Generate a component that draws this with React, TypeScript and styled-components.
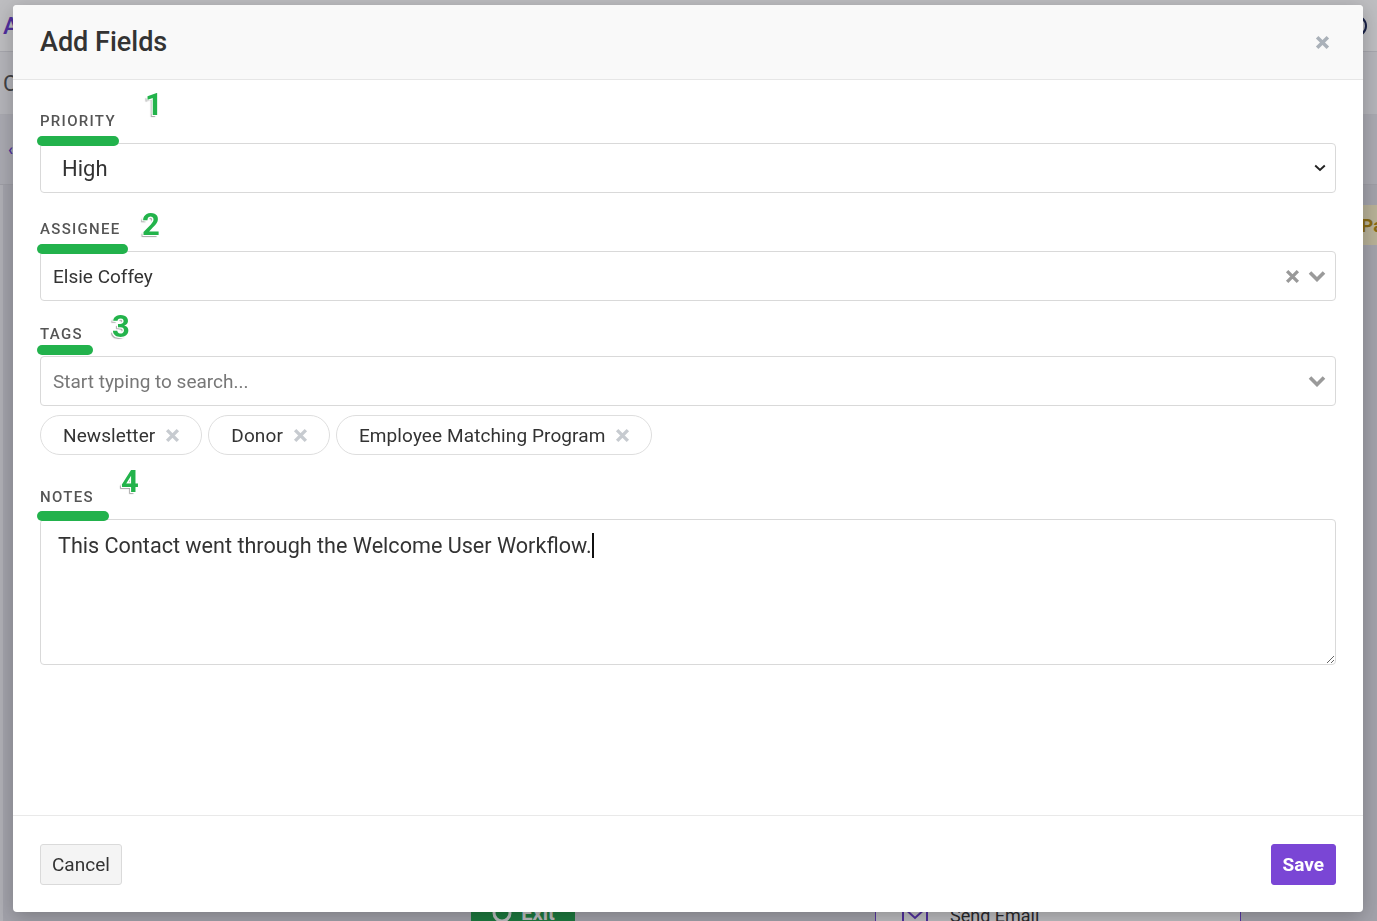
import React from "react";
import styled, { createGlobalStyle } from "styled-components";

const GlobalStyle = createGlobalStyle`
  * { box-sizing: border-box; }
  html, body { margin: 0; padding: 0; height: 100%; }
  body {
    font-family: Roboto, "Liberation Sans", Arial, sans-serif;
    color: #333;
    overflow: hidden;
  }
  #root { height: 100%; }
`;

/* ---------- background page (dimmed behind the dialog) ---------- */

const Page = styled.div`
  height: 100vh;
  display: flex;
  flex-direction: column;
  background: #d8d8df;
`;

const TopNav = styled.header`
  height: 52px;
  flex: none;
  background: #fff;
  border-bottom: 1px solid #e0e0e5;
  display: flex;
  align-items: center;
  justify-content: space-between;
  padding: 0 10px 0 3px;
`;

const Brand = styled.span`
  font-size: 24px;
  font-weight: 500;
  color: #6a3ccf;
`;

const Avatar = styled.span`
  width: 22px;
  height: 22px;
  border: 2px solid #1c2858;
  border-radius: 50%;
`;

const SubHeader = styled.div`
  height: 63px;
  flex: none;
  background: #f3f3f6;
  border-bottom: 1px solid #e3e3e8;
  display: flex;
  align-items: center;
  padding-left: 3px;
  font-size: 22px;
  color: #555;
`;

const Toolbar = styled.div`
  height: 70px;
  flex: none;
  background: #e4e4ea;
  border-bottom: 1px solid #d4d4da;
  display: flex;
  align-items: center;
  padding-left: 8px;
  font-size: 16px;
  font-weight: 700;
  color: #6a3ccf;
`;

const Workspace = styled.div`
  flex: 1;
  position: relative;
  background: #dadae1;
  border-left: 3px solid #ececf0;
`;

const PauseNode = styled.div`
  position: absolute;
  left: 1344px;
  top: 20px;
  height: 40px;
  padding: 0 14px;
  display: flex;
  align-items: center;
  background: #f7eec6;
  color: #b58d12;
  font-weight: 700;
  font-size: 19px;
`;

const ExitNode = styled.div`
  position: absolute;
  left: 468px;
  top: 705px;
  width: 104px;
  height: 46px;
  background: #23a24d;
  color: #fff;
  font-size: 20px;
  font-weight: 700;
  display: flex;
  align-items: center;
  justify-content: center;
  gap: 8px;
`;

const EmailCard = styled.div`
  position: absolute;
  left: 872px;
  top: 690px;
  width: 366px;
  height: 62px;
  background: #fff;
  border: 1px solid #7446d6;
  display: flex;
  align-items: flex-end;
  gap: 22px;
  padding: 0 26px 10px;
  font-size: 18px;
  color: #333;
`;

/* ---------- dialog ---------- */

const Overlay = styled.div`
  position: fixed;
  inset: 0;
  background: rgba(15, 15, 25, 0.27);
  display: flex;
  padding: 5px 14px 9px 13px;
`;

const Modal = styled.div`
  flex: 1;
  display: flex;
  flex-direction: column;
  background: #fff;
  border-radius: 4px;
  overflow: hidden;
  box-shadow: 0 5px 20px rgba(0, 0, 0, 0.25);
`;

const Header = styled.div`
  height: 75px;
  flex: none;
  background: #f9f9f9;
  border-bottom: 1px solid #e6e6e6;
  display: flex;
  align-items: center;
  justify-content: space-between;
  padding: 0 33px 0 27px;
`;

const Title = styled.h2`
  margin: 0;
  font-size: 27px;
  font-weight: 500;
  color: #333;
`;

const IconButton = styled.button`
  border: 0;
  background: transparent;
  padding: 0;
  display: flex;
  cursor: pointer;
`;

const Body = styled.div`
  flex: 1;
  padding: 31px 27px 0 27px;
`;

const Field = styled.div<{ $gap: number }>`
  margin-top: ${(p) => p.$gap}px;
`;

const LabelRow = styled.div`
  position: relative;
  z-index: 1;
  height: 20px;
  margin-bottom: 12px;
`;

const Label = styled.label`
  display: block;
  font-size: 15px;
  line-height: 20px;
  font-weight: 500;
  letter-spacing: 1.3px;
  text-transform: uppercase;
  color: #555;
`;

const Marker = styled.span<{ $width: number; $top: number }>`
  position: absolute;
  left: -3px;
  top: ${(p) => p.$top}px;
  width: ${(p) => p.$width}px;
  height: 10px;
  border-radius: 5px;
  background: #22b24c;
`;

const StepNumber = styled.span<{ $left: number; $top: number }>`
  position: absolute;
  left: ${(p) => p.$left}px;
  top: ${(p) => p.$top}px;
  font-size: 31px;
  line-height: 30px;
  font-weight: 700;
  color: #23b34b;
  text-shadow: -1px -1px 0 #fff, 1px -1px 0 #fff, -1px 1px 0 #fff, 1px 1px 0 #fff,
    -2px 2px 1px rgba(0, 0, 0, 0.35);
`;

const SelectBox = styled.div<{ $size: number; $pad: number; $muted?: boolean }>`
  height: 50px;
  border: 1px solid #d9d9d9;
  border-radius: 4px;
  background: #fff;
  display: flex;
  align-items: center;
  padding: 0 9px 0 ${(p) => p.$pad}px;
  font-size: ${(p) => p.$size}px;
  color: ${(p) => (p.$muted ? "#777" : "#333")};
`;

const Value = styled.span`
  flex: 1;
`;

const Indicators = styled.span`
  display: flex;
  align-items: center;
  gap: 8px;
`;

const ChipRow = styled.div`
  display: flex;
  gap: 6px;
  margin-top: 9px;
`;

const Chip = styled.span`
  height: 40px;
  display: inline-flex;
  align-items: center;
  gap: 10px;
  padding: 0 21px 0 22px;
  border: 1px solid #dedede;
  border-radius: 20px;
  font-size: 19px;
  letter-spacing: 0.1px;
  color: #333;
`;

const NotesBox = styled.div`
  height: 146px;
  border: 1px solid #d9d9d9;
  border-radius: 4px;
  padding: 11px 17px;
  font-size: 21.6px;
  line-height: 30px;
  color: #333;
  resize: vertical;
  overflow: auto;
`;

const Caret = styled.span`
  display: inline-block;
  width: 2px;
  height: 25px;
  background: #111;
  vertical-align: -5px;
`;

const Footer = styled.div`
  height: 97px;
  flex: none;
  border-top: 1px solid #e9e9e9;
  display: flex;
  align-items: center;
  justify-content: space-between;
  padding: 0 27px 0 27px;
`;

const Button = styled.button<{ $primary?: boolean }>`
  height: 41px;
  padding: 0 11px;
  border-radius: 3px;
  font-family: inherit;
  font-size: 19px;
  font-weight: ${(p) => (p.$primary ? 700 : 400)};
  color: ${(p) => (p.$primary ? "#fff" : "#333")};
  background: ${(p) => (p.$primary ? "#7a46d5" : "#f4f4f4")};
  border: 1px solid ${(p) => (p.$primary ? "#7a46d5" : "#dadada")};
  cursor: pointer;
`;

/* ---------- icons ---------- */

const XIcon = ({ size, color, w = 3 }: { size: number; color: string; w?: number }) => (
  <svg width={size} height={size} viewBox="0 0 14 14">
    <path d="M2 2L12 12M12 2L2 12" stroke={color} strokeWidth={w} strokeLinecap="butt" />
  </svg>
);

const SmallChevron = () => (
  <svg width="12" height="8" viewBox="0 0 12 8">
    <path d="M1.2 1.5L6 6L10.8 1.5" stroke="#222" strokeWidth="1.9" fill="none" />
  </svg>
);

const BoldChevron = () => (
  <svg width="18" height="12" viewBox="0 0 18 12">
    <path d="M2 2.5L9 9.5L16 2.5" stroke="#9a9a9a" strokeWidth="3.6" fill="none" />
  </svg>
);

const Envelope = () => (
  <svg width="26" height="20" viewBox="0 0 26 20">
    <rect x="1" y="1" width="24" height="18" fill="none" stroke="#6a3ccf" strokeWidth="2" />
    <path d="M1 1L13 12L25 1" fill="none" stroke="#6a3ccf" strokeWidth="2" />
  </svg>
);

const ExitIcon = () => (
  <svg width="22" height="22" viewBox="0 0 22 22">
    <circle cx="11" cy="11" r="8" fill="none" stroke="#fff" strokeWidth="3" />
  </svg>
);

export default function App() {
  return (
    <>
      <GlobalStyle />
      <Page>
        <TopNav>
          <Brand>Advocacy</Brand>
          <Avatar />
        </TopNav>
        <SubHeader>Contacts</SubHeader>
        <Toolbar>‹</Toolbar>
        <Workspace>
          <PauseNode>Pause</PauseNode>
          <ExitNode>
            <ExitIcon />
            Exit
          </ExitNode>
          <EmailCard>
            <Envelope />
            Send Email
          </EmailCard>
        </Workspace>
      </Page>

      <Overlay>
        <Modal>
          <Header>
            <Title>Add Fields</Title>
            <IconButton aria-label="Close">
              <XIcon size={15} color="#aab1b9" w={3.3} />
            </IconButton>
          </Header>

          <Body>
            <Field $gap={0}>
              <LabelRow>
                <Label>Priority</Label>
                <Marker $width={82} $top={25} />
                <StepNumber $left={105} $top={-21}>1</StepNumber>
              </LabelRow>
              <SelectBox $size={22} $pad={21}>
                <Value>High</Value>
                <SmallChevron />
              </SelectBox>
            </Field>

            <Field $gap={26}>
              <LabelRow>
                <Label>Assignee</Label>
                <Marker $width={91} $top={25} />
                <StepNumber $left={102} $top={-9}>2</StepNumber>
              </LabelRow>
              <SelectBox $size={19} $pad={12}>
                <Value>Elsie Coffey</Value>
                <Indicators>
                  <XIcon size={15} color="#999" w={3.1} />
                  <BoldChevron />
                </Indicators>
              </SelectBox>
            </Field>

            <Field $gap={23}>
              <LabelRow>
                <Label>Tags</Label>
                <Marker $width={56} $top={21} />
                <StepNumber $left={72} $top={-12}>3</StepNumber>
              </LabelRow>
              <SelectBox $size={19} $pad={12} $muted>
                <Value>Start typing to search...</Value>
                <BoldChevron />
              </SelectBox>
              <ChipRow>
                <Chip>
                  Newsletter
                  <XIcon size={15} color="#c7cbd0" w={3.2} />
                </Chip>
                <Chip>
                  Donor
                  <XIcon size={15} color="#c7cbd0" w={3.2} />
                </Chip>
                <Chip>
                  Employee Matching Program
                  <XIcon size={15} color="#c7cbd0" w={3.2} />
                </Chip>
              </ChipRow>
            </Field>

            <Field $gap={32}>
              <LabelRow>
                <Label>Notes</Label>
                <Marker $width={72} $top={24} />
                <StepNumber $left={81} $top={-20}>4</StepNumber>
              </LabelRow>
              <NotesBox>
                This Contact went through the Welcome User Workflow.
                <Caret />
              </NotesBox>
            </Field>
          </Body>

          <Footer>
            <Button>Cancel</Button>
            <Button $primary>Save</Button>
          </Footer>
        </Modal>
      </Overlay>
    </>
  );
}
